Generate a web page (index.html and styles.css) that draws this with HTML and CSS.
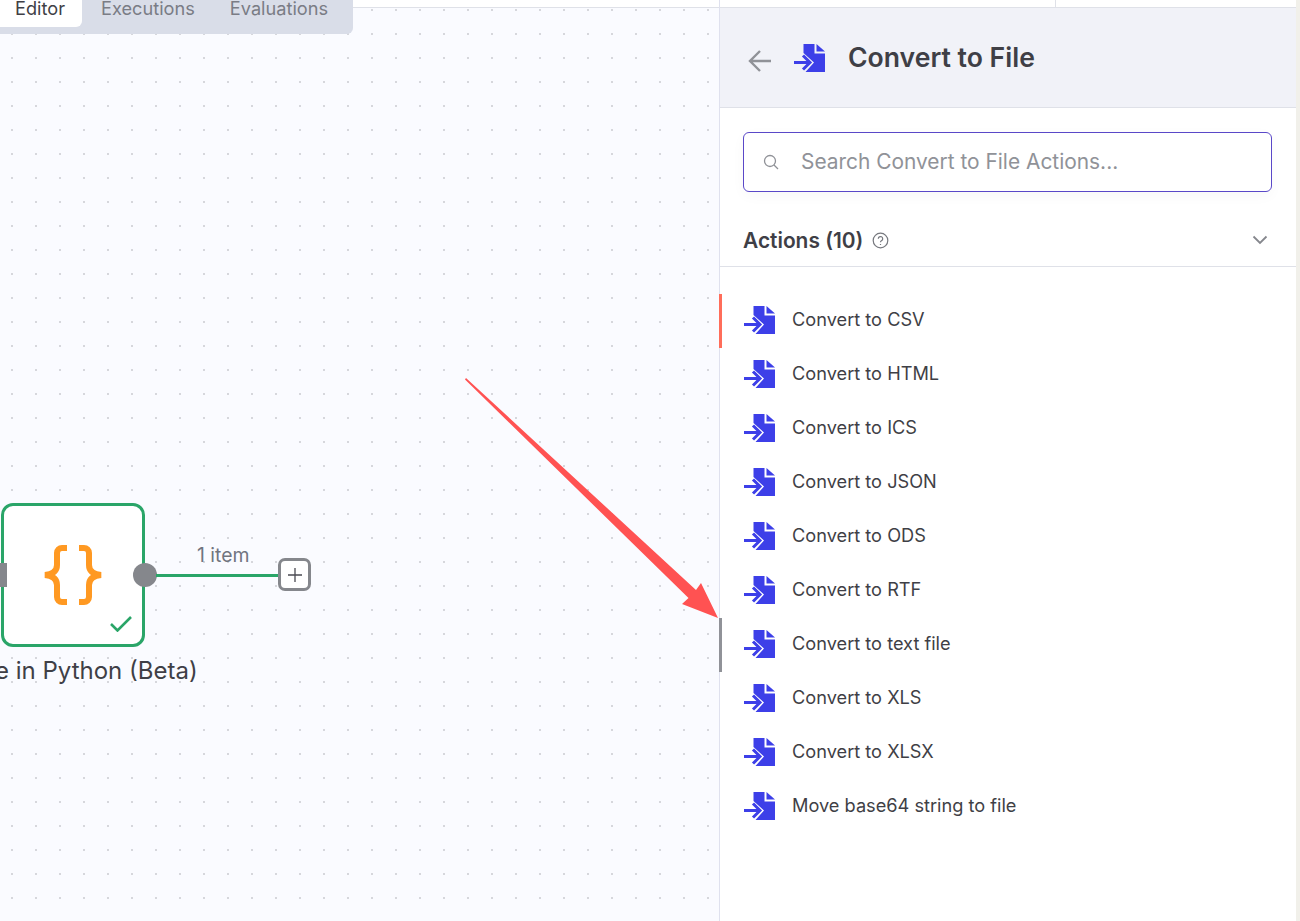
FILE: index.html
```html
<!DOCTYPE html>
<html lang="en">
<head>
  <meta charset="UTF-8" />
  <title>Convert to File</title>
  <link rel="stylesheet" href="styles.css">
</head>
<body>
  <div class="container">
    <main class="canvas">
      <div class="topline"></div>
      <div class="tabs">
        <span class="tab ativo">Editor</span>
        <span class="tab tab-exec">Executions</span>
        <span class="tab tab-fim">Evaluations</span>
      </div>

      <div class="node">
        <span class="porta-in"></span>
        <svg class="chaves" width="60" height="62" viewBox="0 0 60 62" fill="none" stroke="#ff9922" stroke-width="6">
          <path d="M24 4h-5a5 5 0 0 0-5 5v12c0 5-3 9-12 10c9 1 12 5 12 10v12a5 5 0 0 0 5 5h5"/>
          <path d="M36 4h5a5 5 0 0 1 5 5v12c0 5 3 9 12 10c-9 1-12 5-12 10v12a5 5 0 0 1-5 5h-5"/>
        </svg>
        <svg class="check" width="22" height="17" viewBox="0 0 22 17" fill="none" stroke="#2aa568" stroke-width="2.600">
          <path d="M1 9l6.500 6.500L21 2"/>
        </svg>
        <span class="porta-out"></span>
      </div>
      <div class="node-nome">Code in Python (Beta)</div>

      <div class="ligacao"></div>
      <span class="ligacao-label">1 item</span>
      <div class="btn-add">
        <svg width="14" height="14" viewBox="0 0 14 14" stroke="#4a4a52" stroke-width="1.300"><path d="M7 0v14M0 7h14"/></svg>
      </div>

      <svg class="seta" width="264" height="250" viewBox="0 0 264 250">
        <path d="M11 8L241 220L246 213L263 248L227 234L233.500 228L10 9.500Z" fill="#ff5252"/>
      </svg>
    </main>

    <aside class="painel">
      <span class="marca marca-hover"></span>
      <span class="marca marca-ativa"></span>
      <div class="painel-barra"><span class="barra-risco"></span></div>
      <div class="painel-topo">
        <svg class="voltar" width="24" height="24" viewBox="0 0 24 24" fill="none" stroke="#909298" stroke-width="2.400">
          <path d="M23 12H2M12 2L2 12l10 10"/>
        </svg>
        <svg class="icone-topo" width="31" height="28" viewBox="0 0 31 28"><use href="#icone-file"/></svg>
        <h1>Convert to File</h1>
      </div>

      <div class="busca">
        <svg width="16" height="16" viewBox="0 0 16 16" fill="none" stroke="#8f9197" stroke-width="1.300"><circle cx="7" cy="7" r="5.500"/><path d="M11 11l4 4"/></svg>
        <span class="busca-texto">Search Convert to File Actions...</span>
      </div>

      <div class="acoes-titulo">
        <h2>Actions (10)</h2>
        <svg class="ajuda" width="17" height="17" viewBox="0 0 17 17" fill="none" stroke="#76787e" stroke-width="1.200">
          <circle cx="8.500" cy="8.500" r="7.300"/>
          <path d="M6.300 6.800a2.200 2.200 0 1 1 3.400 1.800c-.8.500-1.200.9-1.200 1.700M8.500 12v.9"/>
        </svg>
        <svg class="seta-baixo" width="16" height="10" viewBox="0 0 16 10" fill="none" stroke="#85878d" stroke-width="1.800"><path d="M1.500 1.500L8 8l6.500-6.500"/></svg>
      </div>

      <ul class="lista">
        <li><svg width="31" height="28" viewBox="0 0 31 28"><use href="#icone-file"/></svg>Convert to CSV</li>
        <li><svg width="31" height="28" viewBox="0 0 31 28"><use href="#icone-file"/></svg>Convert to HTML</li>
        <li><svg width="31" height="28" viewBox="0 0 31 28"><use href="#icone-file"/></svg>Convert to ICS</li>
        <li><svg width="31" height="28" viewBox="0 0 31 28"><use href="#icone-file"/></svg>Convert to JSON</li>
        <li><svg width="31" height="28" viewBox="0 0 31 28"><use href="#icone-file"/></svg>Convert to ODS</li>
        <li><svg width="31" height="28" viewBox="0 0 31 28"><use href="#icone-file"/></svg>Convert to RTF</li>
        <li><svg width="31" height="28" viewBox="0 0 31 28"><use href="#icone-file"/></svg>Convert to text file</li>
        <li><svg width="31" height="28" viewBox="0 0 31 28"><use href="#icone-file"/></svg>Convert to XLS</li>
        <li><svg width="31" height="28" viewBox="0 0 31 28"><use href="#icone-file"/></svg>Convert to XLSX</li>
        <li><svg width="31" height="28" viewBox="0 0 31 28"><use href="#icone-file"/></svg>Move base64 string to file</li>
      </ul>
    </aside>
    <div class="borda-direita"></div>
  </div>

  <svg width="0" height="0" class="defs">
    <defs>
      <g id="icone-file">
        <path d="M9.500 0H20.500V9.500H31V28H11.500L20 18.500L9.500 9Z" fill="#3d3fe8"/>
        <path d="M22.500 0L31 7.500H22.500Z" fill="#3d3fe8"/>
        <path d="M0 18.500H15M9 11.500L16 18.500L9 25.500" fill="none" stroke="#3d3fe8" stroke-width="3"/>
      </g>
    </defs>
  </svg>
</body>
</html>
```

FILE: styles.css
```css
body {
  margin: 0;
  font-family: Inter, "Liberation Sans", sans-serif;
  background-color: #fff;
  color: #3f3f46;
  overflow: hidden;
}

.container {
  display: flex;
  height: 921px;
}

.defs {
  position: absolute;
}

/* canvas */
.canvas {
  position: relative;
  width: 719px;
  background-color: #fafbff;
  background-image: radial-gradient(circle at 1px 1px, #d6d7dc 1px, transparent 1.200px);
  background-size: 24px 24px;
  background-position: 11px 9px;
  border-right: 1px solid #dfe1ee;
  overflow: hidden;
}

.topline {
  height: 7px;
  background-color: #fff;
  border-bottom: 1px solid #dfe1e8;
}

.tabs {
  position: absolute;
  top: -8px;
  left: -14px;
  display: flex;
  height: 42px;
  background-color: #d9dde8;
  border-radius: 0 0 6px 0;
}

.tab {
  padding: 6px 17px 0 18px;
  font-size: 18.200px;
  line-height: 20px;
  color: #7a7c85;
}

.tab.ativo {
  height: 29px;
  padding: 6px 17px 0 29px;
  color: #3f3f46;
  background-color: #fff;
  border-radius: 0 0 6px 0;
}

.tab-exec {
  padding-left: 19px;
}

.tab-fim {
  padding-right: 25px;
}

.node {
  position: absolute;
  left: 1px;
  top: 503px;
  width: 138px;
  height: 138px;
  background-color: #fff;
  border: 3px solid #2aa568;
  border-radius: 12px;
}

.chaves {
  position: absolute;
  left: 39px;
  top: 38px;
}

.check {
  position: absolute;
  right: 10px;
  bottom: 12px;
}

.porta-in {
  position: absolute;
  left: -4px;
  top: 57px;
  width: 7px;
  height: 24px;
  background-color: #85878c;
}

.porta-out {
  position: absolute;
  right: -15px;
  top: 57px;
  width: 24px;
  height: 24px;
  background-color: #85878c;
  border-radius: 50%;
}

.node-nome {
  position: absolute;
  left: -85px;
  top: 657px;
  width: 316px;
  text-align: center;
  font-size: 24px;
  font-weight: 400;
  line-height: 28px;
  white-space: nowrap;
}

.ligacao {
  position: absolute;
  left: 156px;
  top: 574px;
  width: 122px;
  height: 3px;
  background-color: #2aa568;
}

.ligacao-label {
  position: absolute;
  left: 197px;
  top: 544px;
  font-size: 19.400px;
  line-height: 22px;
  color: #71757f;
}

.btn-add {
  position: absolute;
  left: 278px;
  top: 558px;
  width: 27px;
  height: 27px;
  display: flex;
  align-items: center;
  justify-content: center;
  background-color: #fff;
  border: 3px solid #85878c;
  border-radius: 7px;
}

.seta {
  position: absolute;
  left: 455px;
  top: 370px;
}

/* painel direito */
.painel {
  position: relative;
  flex: 1;
  background-color: #fff;
}

.marca {
  position: absolute;
  left: -1px;
  width: 3px;
}

.marca-ativa {
  top: 294px;
  height: 54px;
  background-color: #ff6d5a;
}

.marca-hover {
  top: 618px;
  height: 54px;
  background-color: #909298;
}

.painel-barra {
  height: 7px;
}

.barra-risco {
  display: block;
  width: 1px;
  height: 7px;
  margin-left: 335px;
  background-color: #dfe1e8;
}

.painel-topo {
  display: flex;
  align-items: center;
  height: 101px;
  box-sizing: border-box;
  background-color: #f1f2f8;
  border-top: 1px solid #dfe1e8;
  border-bottom: 1px solid #dfe1e8;
}

.voltar {
  margin: 7px 0 0 28px;
}

.icone-topo {
  margin-left: 22px;
}

.painel-topo h1 {
  margin: 0 0 2px 23px;
  font-size: 26.600px;
  font-weight: 600;
  line-height: 32px;
}

.busca {
  display: flex;
  align-items: center;
  gap: 22px;
  height: 60px;
  box-sizing: border-box;
  margin: 24px 24px 0 23px;
  padding-left: 19px;
  font-size: 20.900px;
  color: #909298;
  border: 1px solid #5a48c8;
  border-radius: 6px;
  box-shadow: 0 4px 14px rgba(0, 0, 0, 0.03);
}

.busca-texto {
  margin-bottom: 2px;
}

.acoes-titulo {
  display: flex;
  align-items: center;
  height: 75px;
  box-sizing: border-box;
  padding: 22px 28px 0 23px;
  border-bottom: 1px solid #dfe1e8;
}

.acoes-titulo h2 {
  margin: 0;
  font-size: 20.900px;
  font-weight: 600;
}

.ajuda {
  margin-left: 9px;
}

.seta-baixo {
  margin-left: auto;
}

.lista {
  list-style: none;
  margin: 27px 0 0;
  padding: 0;
}

.lista li {
  display: flex;
  align-items: center;
  gap: 17px;
  height: 50px;
  padding: 0 0 4px 24px;
  font-size: 18.200px;
  font-weight: 400;
  color: #3f3f46;
}

.lista li svg {
  margin-top: 2px;
}

.borda-direita {
  width: 4px;
  background-color: #f1f0ea;
}
```
